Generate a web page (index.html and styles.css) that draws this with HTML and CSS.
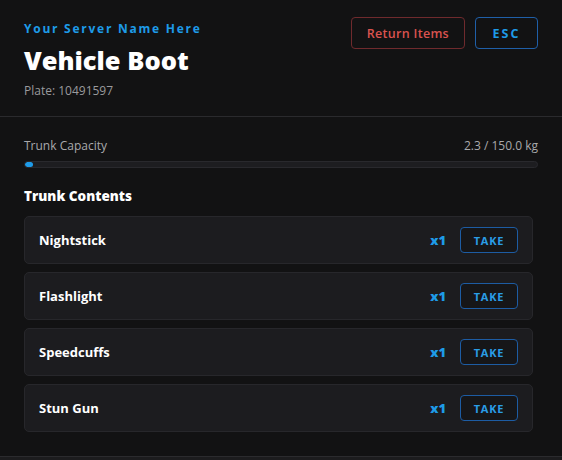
FILE: index.html
```html
<!DOCTYPE html>
<html lang="en">
<head>
<meta charset="utf-8">
<title>Vehicle Boot</title>
<link rel="stylesheet" href="styles.css">
</head>
<body>
<div class="panel">
  <header class="header">
    <div class="header-info">
      <div class="server-name">Your Server Name Here</div>
      <h1 class="title">Vehicle Boot</h1>
      <div class="plate">Plate: 10491597</div>
    </div>
    <div class="header-actions">
      <button class="btn btn-danger">Return Items</button>
      <button class="btn btn-primary btn-esc">ESC</button>
    </div>
  </header>

  <section class="capacity">
    <div class="capacity-row">
      <span>Trunk Capacity</span>
      <span>2.3 / 150.0 kg</span>
    </div>
    <div class="capacity-bar"><div class="capacity-fill" style="width: 1.6%"></div></div>
  </section>

  <section class="contents">
    <h2 class="contents-title">Trunk Contents</h2>
    <ul class="item-list">
      <li class="item">
        <span class="item-name">Nightstick</span>
        <span class="item-qty">x1</span>
        <button class="btn-take">TAKE</button>
      </li>
      <li class="item">
        <span class="item-name">Flashlight</span>
        <span class="item-qty">x1</span>
        <button class="btn-take">TAKE</button>
      </li>
      <li class="item">
        <span class="item-name">Speedcuffs</span>
        <span class="item-qty">x1</span>
        <button class="btn-take">TAKE</button>
      </li>
      <li class="item">
        <span class="item-name">Stun Gun</span>
        <span class="item-qty">x1</span>
        <button class="btn-take">TAKE</button>
      </li>
    </ul>
  </section>
</div>
</body>
</html>
```

FILE: styles.css
```css
* {
  box-sizing: border-box;
}

html, body {
  margin: 0;
  padding: 0;
}

body {
  background: #1c1c1e;
  font-family: "Open Sans", "Noto Sans", sans-serif;
  color: #ffffff;
}

.panel {
  background: #121213;
  height: 457px;
  border-bottom: 1px solid #2b2b2e;
}

/* Header */
.header {
  display: flex;
  justify-content: space-between;
  align-items: flex-start;
  padding: 17px 24px 0;
  height: 117px;
  border-bottom: 1px solid #2a2a2d;
}

.header-info {
  margin-top: 4px;
}

.server-name {
  font-size: 12px;
  line-height: 16px;
  font-weight: 700;
  letter-spacing: 1.75px;
  color: #1e9be8;
}

.title {
  margin: 6px 0 0;
  font-size: 25.5px;
  line-height: 34px;
  font-weight: 800;
  color: #ffffff;
}

.plate {
  margin-top: 6px;
  font-size: 12px;
  line-height: 16px;
  color: #9a9a9d;
}

.header-actions {
  display: flex;
  gap: 10px;
}

.btn {
  height: 32px;
  padding: 0 15px;
  background: transparent;
  border-radius: 4px;
  font-family: inherit;
  font-size: 12.5px;
  font-weight: 600;
  letter-spacing: 0.3px;
  cursor: pointer;
}

.btn-danger {
  border: 1px solid #6f2a2d;
  color: #d9534f;
}

.btn-primary {
  border: 1px solid #1f5fa8;
  color: #1e9be8;
}

.btn-esc {
  width: 63px;
  padding: 0;
  letter-spacing: 2px;
  font-weight: 700;
}

/* Capacity */
.capacity {
  padding: 21px 24px 0;
}

.capacity-row {
  display: flex;
  justify-content: space-between;
  font-size: 12px;
  line-height: 16px;
  color: #a9a9ac;
}

.capacity-bar {
  margin-top: 7px;
  height: 7px;
  background: #1d1d20;
  border: 1px solid #29292d;
  border-radius: 4px;
  overflow: hidden;
}

.capacity-fill {
  height: 100%;
  background: #1e9be8;
  border-radius: 4px;
}

/* Contents */
.contents {
  padding: 20px 29px 0 24px;
}

.contents-title {
  margin: 0;
  font-size: 13.5px;
  line-height: 16px;
  font-weight: 800;
  color: #ffffff;
}

.item-list {
  list-style: none;
  margin: 12px 0 0;
  padding: 0;
  display: flex;
  flex-direction: column;
  gap: 8px;
}

.item {
  display: flex;
  align-items: center;
  height: 48px;
  padding: 0 14px;
  background: #1c1c1f;
  border: 1px solid #27272b;
  border-radius: 5px;
}

.item-name {
  flex: 1;
  font-size: 13px;
  font-weight: 700;
  color: #ffffff;
}

.item-qty {
  font-size: 13px;
  font-weight: 800;
  color: #1e9be8;
  margin-right: 14px;
}

.btn-take {
  width: 58px;
  height: 26px;
  background: #161618;
  border: 1px solid #1d5ca3;
  border-radius: 4px;
  font-family: inherit;
  font-size: 11px;
  font-weight: 700;
  letter-spacing: 0.8px;
  color: #2a9de6;
  cursor: pointer;
}
```
